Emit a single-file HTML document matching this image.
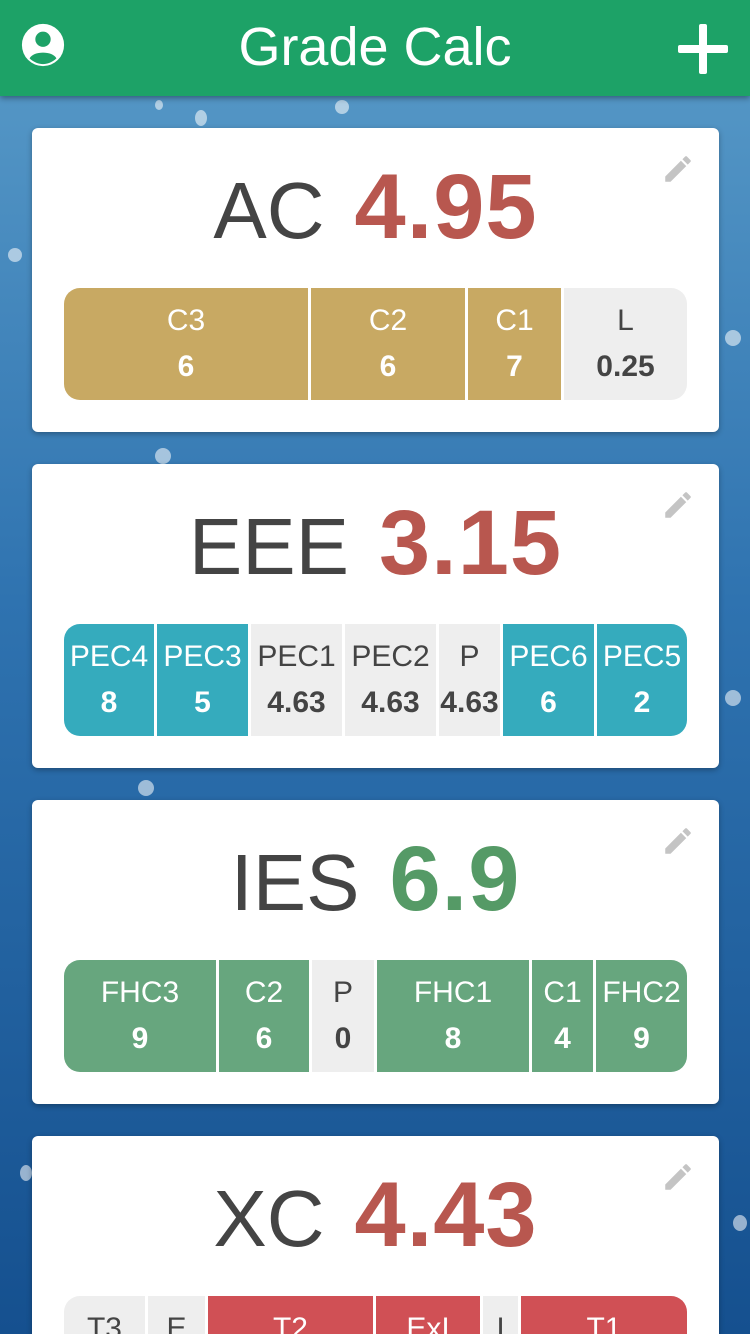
<!DOCTYPE html><html style="width:750px;height:1334px;overflow:hidden"><head><style>
body{margin:0;width:750px;height:1334px;overflow:hidden;font-family:"Liberation Sans",sans-serif;background:linear-gradient(#5a9cc9 0%,#2f73b0 45%,#15508f 100%);position:relative}
.hd{position:absolute;top:0;left:0;width:750px;height:96px;background:#1da267;box-shadow:0 2px 6px rgba(0,0,0,.4);z-index:2}
.hd h1{margin:0;text-align:center;color:#fff;font-weight:normal;font-size:54px;line-height:94px}
.card{position:absolute;left:32px;width:687px;height:304px;background:#fff;border-radius:6px;box-shadow:0 2px 6px rgba(0,0,0,.3)}
.t{position:absolute;top:34px;width:100%;text-align:center;font-size:80px;line-height:90px;color:#444;white-space:nowrap}
.t b{margin-left:30px;font-size:92px;letter-spacing:1px}
.bar{position:absolute;left:32px;top:160px;width:623px;height:112px;border-radius:16px;overflow:hidden;display:flex}
.s{height:112px;text-align:center;color:#fff;font-size:30px;line-height:46px;padding-top:10px;box-sizing:border-box;margin-right:3px;overflow:hidden;white-space:nowrap}
.s:last-child{margin-right:0}
.s i{font-style:normal;font-weight:bold;display:block}
.g{background:#eee;color:#444}
.pen{position:absolute;right:24px;top:24px}
.dot{position:absolute;border-radius:50%;background:rgba(255,255,255,.55)}
</style></head><body>
<div class="hd"><h1>Grade Calc</h1>
<svg style="position:absolute;left:20px;top:22px" width="46" height="46" viewBox="0 0 24 24"><circle cx="12" cy="12" r="11" fill="#fff"/><circle cx="12" cy="9" r="4" fill="#1da267"/><path d="M5 19c2-4 12-4 14 0c-2 2-5 3-7 3s-5-1-7-3z" fill="#1da267"/></svg>
<svg style="position:absolute;left:678px;top:24px" width="50" height="50"><rect x="21" y="0" width="8" height="50" rx="2" fill="#fff"/><rect x="0" y="21" width="50" height="8" rx="2" fill="#fff"/></svg>
</div>
<div class="dot" style="left:155px;top:100px;width:8px;height:10px"></div>
<div class="dot" style="left:195px;top:110px;width:12px;height:16px"></div>
<div class="dot" style="left:335px;top:100px;width:14px;height:14px"></div>
<div class="dot" style="left:8px;top:248px;width:14px;height:14px"></div>
<div class="dot" style="left:725px;top:330px;width:16px;height:16px"></div>
<div class="dot" style="left:155px;top:448px;width:16px;height:16px"></div>
<div class="dot" style="left:725px;top:690px;width:16px;height:16px"></div>
<div class="dot" style="left:138px;top:780px;width:16px;height:16px"></div>
<div class="dot" style="left:20px;top:1165px;width:12px;height:16px"></div>
<div class="dot" style="left:733px;top:1215px;width:14px;height:16px"></div>
<svg width="0" height="0" style="position:absolute"><defs><g id="p"><path d="M3 17.25V21h3.75L17.81 9.94l-3.75-3.75L3 17.25zM20.71 7.04a1 1 0 000-1.41l-2.34-2.34a1 1 0 00-1.41 0l-1.83 1.83 3.75 3.75 1.83-1.83z" fill="#c4c4c4"/></g></defs></svg>

<div class="card" style="top:128px"><svg class="pen" width="34" height="34" viewBox="0 0 24 24"><use href="#p"/></svg>
<div class="t">AC<b style="color:#b8574f">4.95</b></div>
<div class="bar"><div class="s" style="width:244px;background:#c8a963">C3<i>6</i></div><div class="s" style="width:154px;background:#c8a963">C2<i>6</i></div><div class="s" style="width:93px;background:#c8a963">C1<i>7</i></div><div class="s g" style="flex:1">L<i>0.25</i></div></div></div>

<div class="card" style="top:464px"><svg class="pen" width="34" height="34" viewBox="0 0 24 24"><use href="#p"/></svg>
<div class="t">EEE<b style="color:#b8574f">3.15</b></div>
<div class="bar"><div class="s" style="width:90px;background:#35abbd">PEC4<i>8</i></div><div class="s" style="width:91px;background:#35abbd">PEC3<i>5</i></div><div class="s g" style="width:91px">PEC1<i>4.63</i></div><div class="s g" style="width:91px">PEC2<i>4.63</i></div><div class="s g" style="width:61px">P<i>4.63</i></div><div class="s" style="width:91px;background:#35abbd">PEC6<i>6</i></div><div class="s" style="flex:1;background:#35abbd">PEC5<i>2</i></div></div></div>

<div class="card" style="top:800px"><svg class="pen" width="34" height="34" viewBox="0 0 24 24"><use href="#p"/></svg>
<div class="t">IES<b style="color:#559a66">6.9</b></div>
<div class="bar"><div class="s" style="width:152px;background:#67a67e">FHC3<i>9</i></div><div class="s" style="width:90px;background:#67a67e">C2<i>6</i></div><div class="s g" style="width:62px">P<i>0</i></div><div class="s" style="width:152px;background:#67a67e">FHC1<i>8</i></div><div class="s" style="width:61px;background:#67a67e">C1<i>4</i></div><div class="s" style="flex:1;background:#67a67e">FHC2<i>9</i></div></div></div>

<div class="card" style="top:1136px"><svg class="pen" width="34" height="34" viewBox="0 0 24 24"><use href="#p"/></svg>
<div class="t">XC<b style="color:#b8574f">4.43</b></div>
<div class="bar"><div class="s g" style="width:81px">T3<i>0</i></div><div class="s g" style="width:57px">E<i>0</i></div><div class="s" style="width:165px;background:#d05055">T2<i>0</i></div><div class="s" style="width:104px;background:#d05055">ExI<i>0</i></div><div class="s g" style="width:35px">I<i>0</i></div><div class="s" style="flex:1;background:#d05055">T1<i>0</i></div></div></div>
</body></html>
